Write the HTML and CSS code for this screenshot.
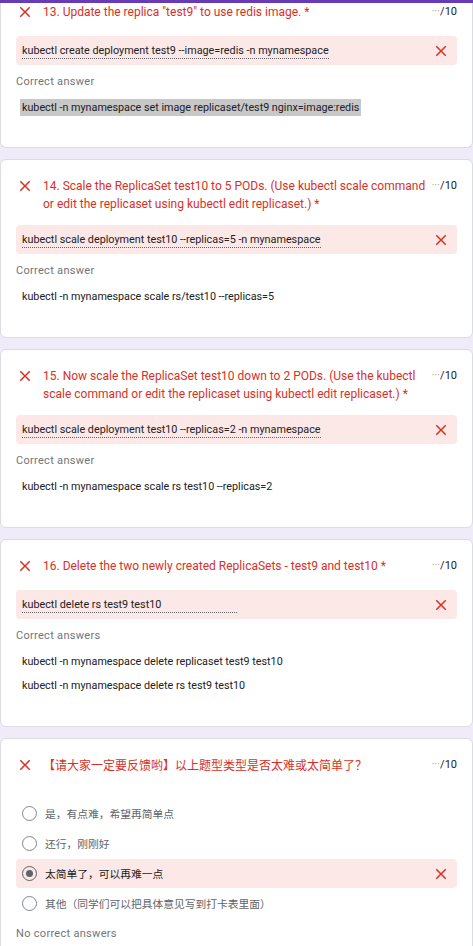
FILE: index.html
```html
<!DOCTYPE html>
<html lang="en">
<head>
<meta charset="utf-8">
<title>Quiz results</title>
<link rel="stylesheet" href="styles.css">
</head>
<body>
<div class="topbar"></div>
<main class="list">

  <section class="card card-first">
    <div class="q-head">
      <svg class="x-icon" viewBox="0 0 24 24"><path d="M19 6.41L17.59 5 12 10.59 6.41 5 5 6.41 10.59 12 5 17.59 6.41 19 12 13.41 17.59 19 19 17.59 13.41 12z"/></svg>
      <div class="q-title">13. Update the replica "test9" to use redis image. *</div>
      <div class="score"><span class="dots">···</span>/10</div>
    </div>
    <div class="resp">
      <span class="resp-text">kubectl create deployment test9 --image=redis -n mynamespace</span>
      <svg class="x-icon" viewBox="0 0 24 24"><path d="M19 6.41L17.59 5 12 10.59 6.41 5 5 6.41 10.59 12 5 17.59 6.41 19 12 13.41 17.59 19 19 17.59 13.41 12z"/></svg>
    </div>
    <div class="label">Correct answer</div>
    <div class="answers">
      <div class="ans"><span class="hl">kubectl -n mynamespace set image replicaset/test9 nginx=image:redis</span></div>
    </div>
  </section>

  <section class="card">
    <div class="q-head">
      <svg class="x-icon" viewBox="0 0 24 24"><path d="M19 6.41L17.59 5 12 10.59 6.41 5 5 6.41 10.59 12 5 17.59 6.41 19 12 13.41 17.59 19 19 17.59 13.41 12z"/></svg>
      <div class="q-title">14. Scale the ReplicaSet test10 to 5 PODs. (Use kubectl scale command or edit the replicaset using kubectl edit replicaset.) *</div>
      <div class="score"><span class="dots">···</span>/10</div>
    </div>
    <div class="resp">
      <span class="resp-text">kubectl scale deployment test10 --replicas=5 -n mynamespace</span>
      <svg class="x-icon" viewBox="0 0 24 24"><path d="M19 6.41L17.59 5 12 10.59 6.41 5 5 6.41 10.59 12 5 17.59 6.41 19 12 13.41 17.59 19 19 17.59 13.41 12z"/></svg>
    </div>
    <div class="label">Correct answer</div>
    <div class="answers">
      <div class="ans">kubectl -n mynamespace scale rs/test10 --replicas=5</div>
    </div>
  </section>

  <section class="card">
    <div class="q-head">
      <svg class="x-icon" viewBox="0 0 24 24"><path d="M19 6.41L17.59 5 12 10.59 6.41 5 5 6.41 10.59 12 5 17.59 6.41 19 12 13.41 17.59 19 19 17.59 13.41 12z"/></svg>
      <div class="q-title">15. Now scale the ReplicaSet test10 down to 2 PODs. (Use the kubectl scale command or edit the replicaset using kubectl edit replicaset.) *</div>
      <div class="score"><span class="dots">···</span>/10</div>
    </div>
    <div class="resp">
      <span class="resp-text">kubectl scale deployment test10 --replicas=2 -n mynamespace</span>
      <svg class="x-icon" viewBox="0 0 24 24"><path d="M19 6.41L17.59 5 12 10.59 6.41 5 5 6.41 10.59 12 5 17.59 6.41 19 12 13.41 17.59 19 19 17.59 13.41 12z"/></svg>
    </div>
    <div class="label">Correct answer</div>
    <div class="answers">
      <div class="ans">kubectl -n mynamespace scale rs test10 --replicas=2</div>
    </div>
  </section>

  <section class="card">
    <div class="q-head">
      <svg class="x-icon" viewBox="0 0 24 24"><path d="M19 6.41L17.59 5 12 10.59 6.41 5 5 6.41 10.59 12 5 17.59 6.41 19 12 13.41 17.59 19 19 17.59 13.41 12z"/></svg>
      <div class="q-title">16. Delete the two newly created ReplicaSets - test9 and test10 *</div>
      <div class="score"><span class="dots">···</span>/10</div>
    </div>
    <div class="resp">
      <span class="resp-text resp-min">kubectl delete rs test9 test10</span>
      <svg class="x-icon" viewBox="0 0 24 24"><path d="M19 6.41L17.59 5 12 10.59 6.41 5 5 6.41 10.59 12 5 17.59 6.41 19 12 13.41 17.59 19 19 17.59 13.41 12z"/></svg>
    </div>
    <div class="label">Correct answers</div>
    <div class="answers">
      <div class="ans">kubectl -n mynamespace delete replicaset test9 test10</div>
      <div class="ans">kubectl -n mynamespace delete rs test9 test10</div>
    </div>
  </section>

  <section class="card card-last">
    <div class="q-head">
      <svg class="x-icon" viewBox="0 0 24 24"><path d="M19 6.41L17.59 5 12 10.59 6.41 5 5 6.41 10.59 12 5 17.59 6.41 19 12 13.41 17.59 19 19 17.59 13.41 12z"/></svg>
      <div class="q-title cjk">【请大家一定要反馈哟】以上题型类型是否太难或太简单了？</div>
      <div class="score"><span class="dots">···</span>/10</div>
    </div>
    <div class="options">
      <div class="opt"><span class="radio"></span><span class="opt-text">是，有点难，希望再简单点</span></div>
      <div class="opt"><span class="radio"></span><span class="opt-text">还行，刚刚好</span></div>
      <div class="opt opt-wrong"><span class="radio radio-on"></span><span class="opt-text">太简单了，可以再难一点</span>
        <svg class="x-icon" viewBox="0 0 24 24"><path d="M19 6.41L17.59 5 12 10.59 6.41 5 5 6.41 10.59 12 5 17.59 6.41 19 12 13.41 17.59 19 19 17.59 13.41 12z"/></svg>
      </div>
      <div class="opt"><span class="radio"></span><span class="opt-text">其他（同学们可以把具体意见写到打卡表里面）</span></div>
    </div>
    <div class="label label-none">No correct answers</div>
  </section>

</main>
</body>
</html>
```

FILE: styles.css
```css
* { box-sizing: border-box; }

html, body {
  margin: 0;
  padding: 0;
}

body {
  background: #f0ebf8;
  font-family: Roboto, "Noto Sans CJK SC", Arial, sans-serif;
  color: #202124;
  overflow: hidden;
}

.topbar {
  height: 3px;
  background: #673ab7;
}

.list {
  display: flex;
  flex-direction: column;
  gap: 11px;
}

.card {
  background: #fff;
  border: 1px solid #dadce0;
  border-radius: 6px;
  padding: 17px 15px 28px;
}

.card-first {
  border-top: none;
  border-radius: 0 0 6px 6px;
  padding-top: 0;
  padding-bottom: 27px;
}

.q-head {
  display: flex;
  align-items: flex-start;
  min-height: 21px;
  margin-bottom: 12px;
}

.q-head .x-icon {
  flex: 0 0 auto;
  margin-right: 9px;
}

.x-icon {
  width: 18px;
  height: 18px;
  fill: #d93025;
}

.q-title {
  flex: 1 1 auto;
  font-size: 12px;
  line-height: 18px;
  color: #d93025;
  padding-right: 6px;
}

.q-title.cjk {
  font-family: "Noto Sans CJK SC", sans-serif;
}

.score {
  flex: 0 0 auto;
  font-size: 11px;
  line-height: 18px;
  color: #202124;
}

.dots {
  color: #9aa0a6;
  font-size: 10px;
  letter-spacing: 0;
  margin-right: 0.5px;
}

.resp {
  display: flex;
  align-items: center;
  justify-content: space-between;
  height: 29px;
  background: #fce8e6;
  border-radius: 4px;
  padding: 0 7px 0 6px;
}

.resp-text {
  display: inline-block;
  font-size: 10.8px;
  line-height: 14px;
  padding-top: 2px;
  border-bottom: 1px dotted #5f6368;
}

.resp-min {
  min-width: 215px;
}

.label {
  margin-top: 10px;
  font-size: 11px;
  line-height: 14px;
  color: #70757a;
  letter-spacing: 0.3px;
}

.answers {
  margin-top: 7px;
  display: flex;
  flex-direction: column;
}

.ans {
  height: 24px;
  line-height: 24px;
  font-size: 10.75px;
  padding-left: 6px;
}

.hl {
  background: #c8c8c8;
  padding: 2px 2px;
  margin-left: -2px;
}

.card-last {
  padding-bottom: 6px;
  border-radius: 6px 6px 0 0;
}

.options {
  margin-top: 22px;
  display: flex;
  flex-direction: column;
  gap: 1px;
}

.opt {
  display: flex;
  align-items: center;
  height: 29px;
  padding: 0 7px 0 6px;
  border-radius: 4px;
}

.opt-wrong {
  background: #fce8e6;
}

.opt-wrong .opt-text {
  color: #202124;
  flex: 1 1 auto;
}

.radio {
  width: 15px;
  height: 15px;
  border: 1.5px solid #80868b;
  border-radius: 50%;
  margin-right: 8px;
  flex: 0 0 auto;
  display: flex;
  align-items: center;
  justify-content: center;
}

.radio-on {
  border-color: #5f6368;
}

.radio-on::after {
  content: "";
  width: 7px;
  height: 7px;
  border-radius: 50%;
  background: #5f6368;
}

.opt-text {
  font-family: "Noto Sans CJK SC", sans-serif;
  font-size: 10.75px;
  color: #5f6368;
}

.label-none {
  margin-top: 9px;
}
```
